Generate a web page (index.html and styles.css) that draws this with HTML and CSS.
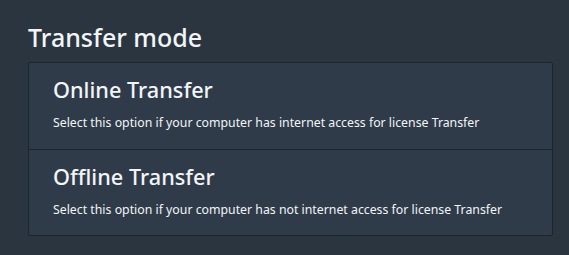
FILE: index.html
```html
<!DOCTYPE html>
<html>
<head>
<meta charset="utf-8">
<link rel="stylesheet" href="styles.css">
</head>
<body>
<div class="page">
  <h1 class="title">Transfer mode</h1>
  <div class="options">
    <div class="option">
      <div class="option-name">Online Transfer</div>
      <div class="option-desc">Select this option if your computer has internet access for license Transfer</div>
    </div>
    <div class="option">
      <div class="option-name">Offline Transfer</div>
      <div class="option-desc">Select this option if your computer has not internet access for license Transfer</div>
    </div>
  </div>
</div>
</body>
</html>
```
FILE: styles.css
```css
html, body {
  margin: 0;
  padding: 0;
  background: #2b3540;
  width: 569px;
  height: 255px;
  overflow: hidden;
}
.page {
  padding: 20px 16px 0 28px;
  font-family: "Noto Sans", sans-serif;
  color: #f2f5f8;
}
.title {
  margin: 0;
  font-size: 25px;
  font-weight: 500;
  line-height: 34px;
  height: 42px;
}
.options {
  width: 523px;
  border: 1px solid #1c242d;
  border-radius: 2px;
  background: #2f3b48;
}
.option {
  height: 86px;
  box-sizing: border-box;
  padding: 13px 24px 0 24px;
}
.option + .option {
  border-top: 1px solid #1c242d;
}
.option-name {
  font-size: 21.7px;
  line-height: 28px;
  font-weight: 500;
}
.option-desc {
  margin-top: 11px;
  font-size: 12.3px;
  line-height: 16px;
}
```
